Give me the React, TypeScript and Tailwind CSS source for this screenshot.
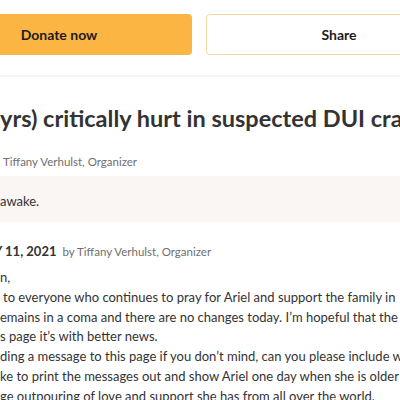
import React from "react";

export default function App() {
  const lines = [
    { t: "n,", pl: "pl-0" },
    { t: "to everyone who continues to pray for Ariel and support the family in", pl: "pl-[3px]" },
    { t: "emains in a coma and there are no changes today. I\u2019m hopeful that the next time I post", pl: "pl-0" },
    { t: "s page it\u2019s with better news.", pl: "pl-0" },
    { t: "ding a message to this page if you don\u2019t mind, can you please include when", pl: "pl-0" },
    { t: "ke to print the messages out and show Ariel one day when she is older", pl: "pl-0" },
    { t: "ge outpouring of love and support she has from all over the world.", pl: "pl-0" },
  ];
  return (
    <div className="w-[400px] h-[400px] overflow-hidden bg-white text-[#333333]" style={{ fontFamily: "Lato, 'Open Sans', sans-serif" }}>
      <div className="flex gap-[14px] ml-[-74px] pt-[14px]">
        <div className="w-[266px] h-[41px] shrink-0 rounded-[4px] bg-[#fbb543] flex items-center justify-center text-[14px] font-bold text-[#1c1c1c]">
          Donate now
        </div>
        <div className="w-[266px] h-[41px] shrink-0 rounded-[4px] border border-[#f6d7a4] bg-white flex items-center justify-center text-[14px] font-bold text-[#1c1c1c]">
          Share
        </div>
      </div>
      <div className="mt-[20px] h-[2px] bg-[#f4f4f4]" />
      <div className="mt-[27px] text-[23.5px] leading-[28px] font-bold whitespace-nowrap text-[#333333]">
        yrs) critically hurt in suspected DUI crash
      </div>
      <div className="mt-[22px] pl-[3px] text-[11.5px] leading-[16px] text-[#6f6f6f] whitespace-nowrap">
        Tiffany Verhulst, Organizer
      </div>
      <div className="mt-[6px] h-[46px] pt-[15px] bg-[#faf6f3] text-[13px] leading-[20px] whitespace-nowrap">
        awake.
      </div>
      <div className="mt-[19px] h-[20px] text-[13px] leading-[20px] whitespace-nowrap flex items-baseline gap-[6px]">
        <span className="font-bold text-[#333333] ml-[-6px]">Y 11, 2021</span>
        <span className="text-[#6f6f6f] text-[11.5px]">by Tiffany Verhulst, Organizer</span>
      </div>
      <div className="mt-[7px] text-[13px] leading-[19.8px] whitespace-nowrap">
        {lines.map((l, i) => (
          <div key={i} className={l.pl}>{l.t}</div>
        ))}
      </div>
    </div>
  );
}
